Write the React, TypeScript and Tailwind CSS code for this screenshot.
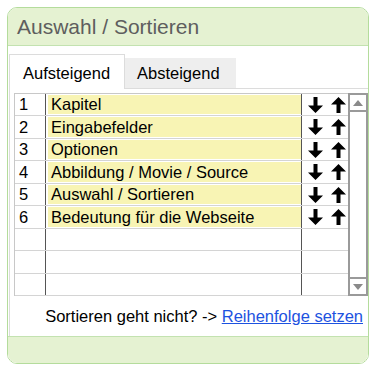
import React from "react"

const items = [
  "Kapitel",
  "Eingabefelder",
  "Optionen",
  "Abbildung / Movie / Source",
  "Auswahl / Sortieren",
  "Bedeutung für die Webseite",
]

function ArrowDown() {
  return (
    <svg width="15" height="16" viewBox="0 0 15 16">
      <path d="M5.5 0h4v8.5h5.5L7.5 16 0 8.5h5.5z" fill="#000" />
    </svg>
  )
}

function ArrowUp() {
  return (
    <svg width="15" height="16" viewBox="0 0 15 16">
      <path d="M5.5 16h4V7.5h5.5L7.5 0 0 7.5h5.5z" fill="#000" />
    </svg>
  )
}

export default function App() {
  const rows = Array.from({ length: 9 }, (_, i) => items[i] ?? null)

  return (
    <div className="w-[376px] h-[365px] bg-white pt-[7px] pl-[7px] font-['Liberation_Sans',Arial,sans-serif]">
      <div className="w-[362px] h-[357px] border border-[#b4dc9c] rounded-[10px] overflow-hidden flex flex-col">
        <div className="h-[38px] shrink-0 bg-[#e5f2d2] border-b border-[#c3e2b0] pl-[9px] flex items-center text-[21px] text-[#5e5e5e]">
          Auswahl / Sortieren
        </div>

        <div className="flex-1 bg-white flex flex-col">
          <div className="pt-[8px] pl-[1px] flex items-end">
            <div className="w-[116px] h-[35px] bg-white border border-b-0 border-[#dcdcdc] pl-[13px] pt-[3px] flex items-center text-[16.5px] text-black relative z-10 -mb-px">
              Aufsteigend
            </div>
            <div className="w-[111px] h-[30px] bg-[#eeeeee] pl-[12px] flex items-center text-[16.5px] text-black">
              Absteigend
            </div>
          </div>

          <div className="ml-[1px] w-[359px] border-t border-l border-[#dcdcdc] pt-[4px] pl-[4px]">
            <div className="flex w-[354px]">
              <div className="w-[334px] border-t border-l border-[#c8c8c8]">
                {rows.map((label, i) => (
                  <div
                    key={i}
                    className={`flex border-b border-[#d4d4d4] ${i % 2 ? "h-[23px]" : "h-[22px]"}`}
                  >
                    <div className="w-[30px] pl-[4px] flex items-center text-[16.5px] text-black">
                      {label ? i + 1 : ""}
                    </div>
                    <div className="w-px bg-[#555]" />
                    <div className="w-[255px] py-[1px] pl-[2px]">
                      {label && (
                        <div className="h-full bg-[#f8f4b4] pl-[3px] flex items-center text-[16.5px] text-black">
                          {label}
                        </div>
                      )}
                    </div>
                    <div className="w-px bg-[#555]" />
                    <div className="flex-1 flex items-center gap-[8px] pl-[6px]">
                      {label && (
                        <>
                          <ArrowDown />
                          <ArrowUp />
                        </>
                      )}
                    </div>
                  </div>
                ))}
              </div>

              <div className="w-[20px] border-2 border-[#9a9a9a] flex flex-col justify-between bg-white">
                <div className="h-[17px] border-b-2 border-[#9a9a9a] flex items-center justify-center">
                  <svg width="10" height="6" viewBox="0 0 10 6">
                    <path d="M0 6L5 0l5 6z" fill="#8a8a8a" />
                  </svg>
                </div>
                <div className="h-[17px] border-t-2 border-[#9a9a9a] flex items-center justify-center">
                  <svg width="10" height="6" viewBox="0 0 10 6">
                    <path d="M0 0h10L5 6z" fill="#8a8a8a" />
                  </svg>
                </div>
              </div>
            </div>

            <div className="h-[40px] pr-[5px] flex items-center justify-end text-[16.5px] text-black">
              <span>Sortieren geht nicht? -&gt;&nbsp;</span>
              <a href="#" className="text-[#1d52e0] underline">
                Reihenfolge setzen
              </a>
            </div>
          </div>

          <div className="flex-1 bg-[#e5f2d2] border-t border-[#c3e2b0]" />
        </div>
      </div>
    </div>
  )
}
